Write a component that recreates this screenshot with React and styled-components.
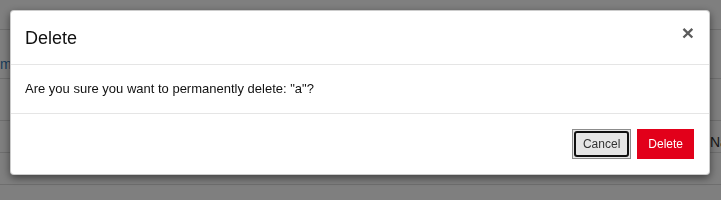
import React from 'react';
import styled, { createGlobalStyle } from 'styled-components';

const GlobalStyle = createGlobalStyle`
  html, body {
    margin: 0;
    padding: 0;
    height: 200px;
    overflow: hidden;
    background: #fff;
    font-family: "Liberation Sans", Arial, sans-serif;
    font-size: 14px;
    color: #333;
  }
  * { box-sizing: border-box; }
`;

// page behind the backdrop
const Page = styled.div`
  width: 721px;
  height: 200px;
  overflow: hidden;
`;

const PageRow = styled.div`
  height: ${({ h }) => h}px;
  border-bottom: 1px solid #ddd;
  display: flex;
  align-items: flex-end;
  white-space: nowrap;
  padding-left: ${({ pad }) => pad || 0}px;
  padding-bottom: ${({ bottom }) => bottom || 0}px;
  color: ${({ link }) => (link ? '#337ab7' : '#333')};
  font-size: 14px;
`;

const Backdrop = styled.div`
  position: fixed;
  inset: 0;
  background: rgba(0, 0, 0, 0.5);
`;

const Dialog = styled.div`
  position: fixed;
  top: 10px;
  left: 10px;
  right: 11px;
  background: #fff;
  border: 1px solid rgba(0, 0, 0, 0.2);
  border-radius: 4px;
  box-shadow: 0 3px 9px rgba(0, 0, 0, 0.5);
`;

const Header = styled.div`
  display: flex;
  align-items: flex-start;
  justify-content: space-between;
  padding: 15px 15px 14px 14px;
  border-bottom: 1px solid #e5e5e5;
`;

const Title = styled.h4`
  margin: 0;
  font-size: 18px;
  font-weight: normal;
  line-height: 24px;
  color: #111;
`;

const Close = styled.button`
  border: 0;
  background: none;
  padding: 0;
  margin-top: -4px;
  font-size: 21px;
  font-weight: bold;
  line-height: 1;
  color: #5c5c5c;
  font-family: inherit;
  cursor: pointer;
`;

const Body = styled.div`
  padding: 14px;
  line-height: 20px;
  font-size: 13px;
  color: #111;
  border-bottom: 1px solid #e5e5e5;
`;

const Footer = styled.div`
  display: flex;
  justify-content: flex-end;
  gap: 6px;
  padding: 15px 15px 15px 14px;
`;

const Button = styled.button`
  position: relative;
  height: 30px;
  padding: 0 10px;
  font-family: inherit;
  font-size: 12px;
  border-radius: 0;
  cursor: pointer;
  border: 1px solid ${({ danger }) => (danger ? '#e2001a' : '#8c8c8c')};
  background: ${({ danger }) => (danger ? '#e2001a' : '#e6e6e6')};
  color: ${({ danger }) => (danger ? '#fff' : '#333')};

  ${({ focused }) =>
    focused &&
    `
    &::after {
      content: '';
      position: absolute;
      inset: 1px;
      border: 2px solid #111;
      border-radius: 3px;
    }
  `}
`;

export default function App() {
  return (
    <>
      <GlobalStyle />
      <Page>
        <PageRow h={30} />
        <PageRow h={49} link bottom={6}>me</PageRow>
        <PageRow h={42} />
        <PageRow h={32} pad={710} bottom={2}>Na</PageRow>
        <PageRow h={32} />
      </Page>
      <Backdrop />
      <Dialog>
        <Header>
          <Title>Delete</Title>
          <Close aria-label="Close">×</Close>
        </Header>
        <Body>Are you sure you want to permanently delete: "a"?</Body>
        <Footer>
          <Button focused>Cancel</Button>
          <Button danger>Delete</Button>
        </Footer>
      </Dialog>
    </>
  );
}
